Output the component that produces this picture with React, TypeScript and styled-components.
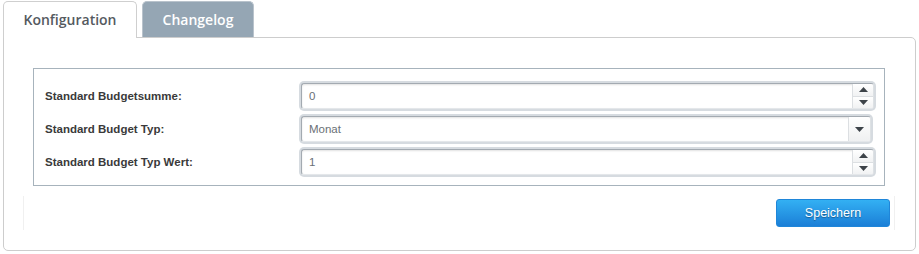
import React from 'react'
import styled, { createGlobalStyle } from 'styled-components'

const GlobalStyle = createGlobalStyle`
  body {
    margin: 0;
    background: #ffffff;
    font-family: 'Liberation Sans', Arial, sans-serif;
  }
`

const Page = styled.div`
  width: 919px;
  height: 254px;
  padding: 1px 0 0 3px;
  box-sizing: border-box;
`

const TabBar = styled.div`
  display: flex;
  gap: 5px;
  height: 36px;
  position: relative;
  z-index: 1;
`

const Tab = styled.div<{ $active?: boolean }>`
  box-sizing: border-box;
  width: ${p => (p.$active ? '134px' : '112px')};
  height: ${p => (p.$active ? '37px' : '36px')};
  display: flex;
  align-items: center;
  justify-content: center;
  padding-bottom: ${p => (p.$active ? '2px' : '1px')};
  border: 1px solid ${p => (p.$active ? '#cfcfcf' : '#b9c3cc')};
  border-bottom: none;
  border-radius: 5px 5px 0 0;
  background: ${p => (p.$active ? '#ffffff' : '#95a6b4')};
  color: ${p => (p.$active ? '#555a5f' : '#ffffff')};
  font-family: 'Open Sans', sans-serif;
  font-weight: 600;
  font-size: 14px;
`

const Panel = styled.div`
  box-sizing: border-box;
  width: 913px;
  height: 214px;
  border: 1px solid #cdcdcd;
  border-radius: 0 5px 5px 5px;
  padding: 30px 0 0 19px;
  display: flex;
  flex-direction: column;
`

const Fieldset = styled.div`
  box-sizing: border-box;
  margin-left: 10px;
  width: 852px;
  height: 118px;
  border: 1px solid #a7b3bc;
  padding: 12px 0 0 11px;
  display: flex;
  flex-direction: column;
  gap: 3px;
`

const Row = styled.div`
  display: flex;
  align-items: center;
  height: 30px;
`

const Label = styled.div`
  width: 254px;
  font-size: 11.5px;
  font-weight: bold;
  color: #3a3a3a;
`

const Frame = styled.div<{ $narrow?: boolean }>`
  box-sizing: border-box;
  width: ${p => (p.$narrow ? '574px' : '577px')};
  height: 30px;
  padding: 2px;
  background: #d6dbe0;
  border-radius: 5px;
  display: flex;
`

const Field = styled.div`
  flex: 1;
  display: flex;
  background: #ffffff;
  border: 1px solid #a3aab1;
  border-right-color: #dde1e4;
  border-bottom-color: #e4e7ea;
  border-radius: 3px;
  box-shadow: inset 0 1px 2px rgba(0, 0, 0, 0.12);
  overflow: hidden;
`

const Value = styled.div`
  flex: 1;
  display: flex;
  align-items: center;
  padding-left: 7px;
  font-size: 11.5px;
  color: #6a7076;
`

const Spinner = styled.div`
  width: 20px;
  display: flex;
  flex-direction: column;
  border-left: 1px solid #dcdfe2;
`

const SpinButton = styled.div<{ $down?: boolean }>`
  flex: 1;
  display: flex;
  align-items: center;
  justify-content: center;
  background: linear-gradient(#ffffff, #f1f2f3);
  border-top: ${p => (p.$down ? '1px solid #dcdfe2' : 'none')};
`

const DropButton = styled.div`
  width: 21px;
  display: flex;
  align-items: center;
  justify-content: center;
  border-left: 1px solid #dcdfe2;
  background: linear-gradient(#ffffff, #eff0f1);
`

const Arrow = ({ up }: { up?: boolean }) => (
  <svg width="9" height="5" viewBox="0 0 9 5">
    <path d={up ? 'M0 5 L4.5 0 L9 5 Z' : 'M0 0 L4.5 5 L9 0 Z'} fill="#3d4349" />
  </svg>
)

const ButtonBar = styled.div`
  box-sizing: border-box;
  margin: 10px 0 0 0;
  width: 872px;
  height: 34px;
  border-left: 1px solid #f0f0f0;
  border-right: 1px solid #f0f0f0;
  display: flex;
  justify-content: flex-end;
  align-items: center;
  padding-right: 4px;
`

const SaveButton = styled.button`
  box-sizing: border-box;
  width: 114px;
  height: 28px;
  border: 1px solid #1f86d9;
  border-radius: 3px;
  background: linear-gradient(#33b0f3, #1b7fd7);
  color: #ffffff;
  font-family: 'Liberation Sans', Arial, sans-serif;
  font-size: 12.5px;
  text-shadow: 0 1px 1px rgba(0, 0, 0, 0.35);
  cursor: pointer;
`

const NumberInput = ({ value }: { value: string }) => (
  <Frame>
    <Field>
      <Value>{value}</Value>
      <Spinner>
        <SpinButton><Arrow up /></SpinButton>
        <SpinButton $down><Arrow /></SpinButton>
      </Spinner>
    </Field>
  </Frame>
)

const SelectInput = ({ value }: { value: string }) => (
  <Frame $narrow>
    <Field>
      <Value>{value}</Value>
      <DropButton><Arrow /></DropButton>
    </Field>
  </Frame>
)

const App: React.FC = () => {
  return <Page>
    <GlobalStyle/>
    <TabBar>
      <Tab $active>Konfiguration</Tab>
      <Tab>Changelog</Tab>
    </TabBar>
    <Panel>
      <Fieldset>
        <Row>
          <Label>Standard Budgetsumme:</Label>
          <NumberInput value="0"/>
        </Row>
        <Row>
          <Label>Standard Budget Typ:</Label>
          <SelectInput value="Monat"/>
        </Row>
        <Row>
          <Label>Standard Budget Typ Wert:</Label>
          <NumberInput value="1"/>
        </Row>
      </Fieldset>
      <ButtonBar>
        <SaveButton>Speichern</SaveButton>
      </ButtonBar>
    </Panel>
  </Page>
}

export default App
